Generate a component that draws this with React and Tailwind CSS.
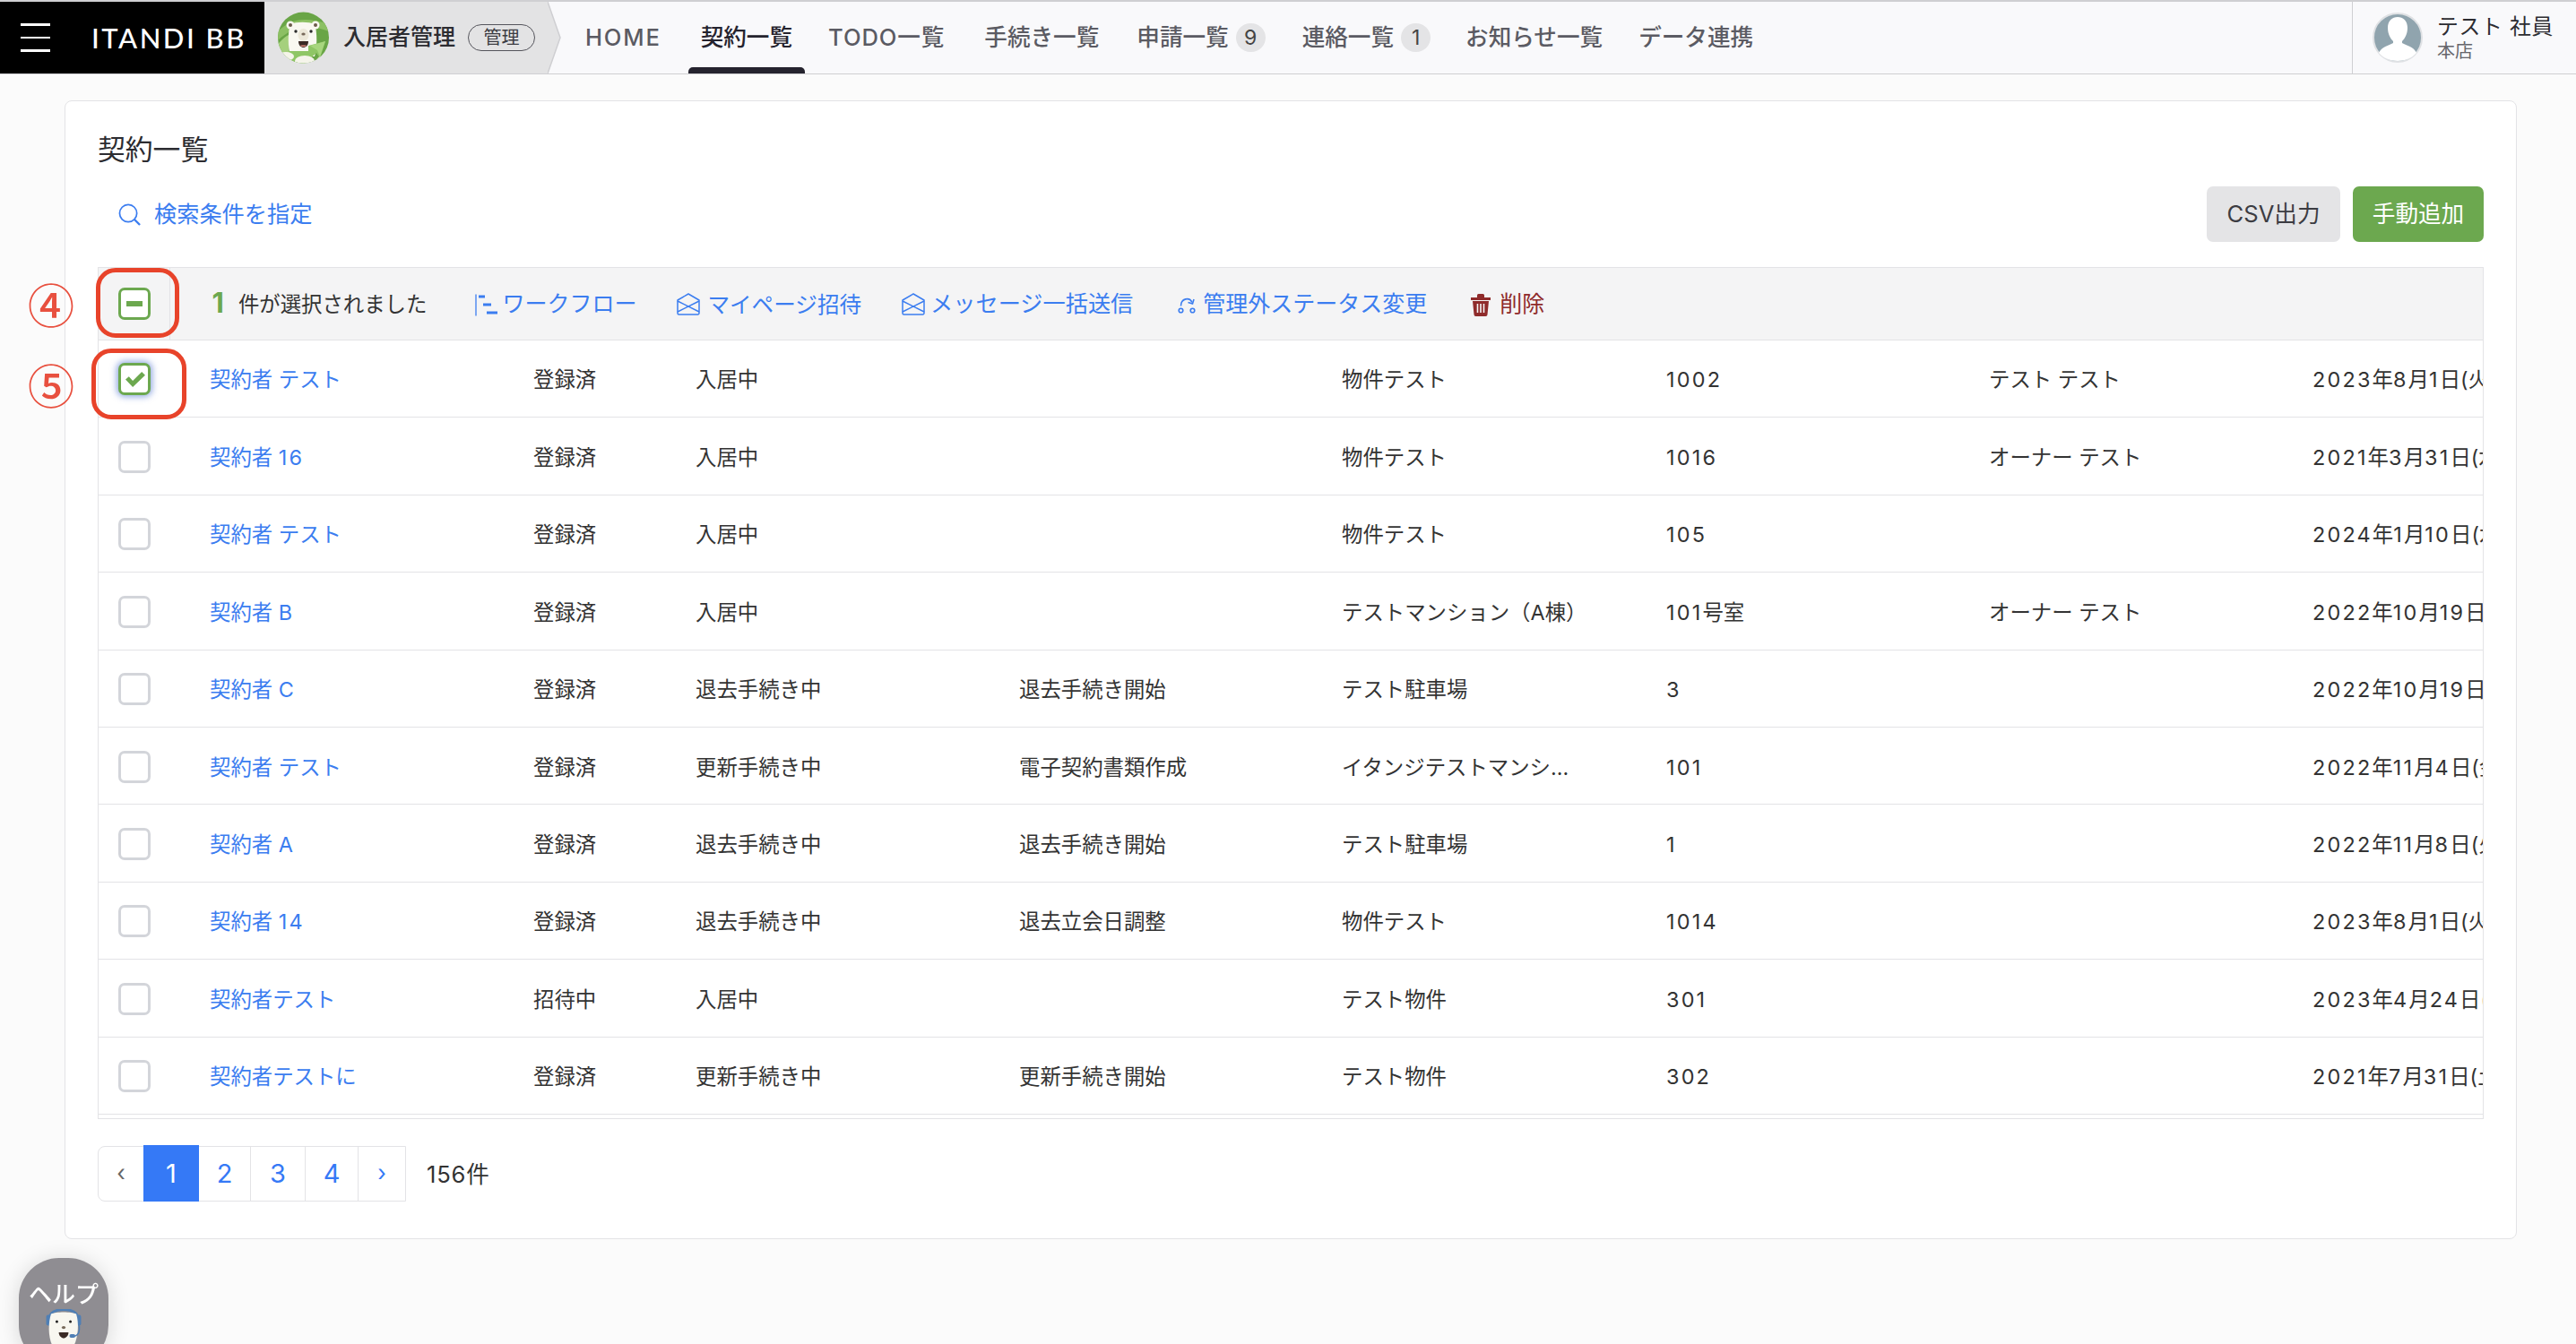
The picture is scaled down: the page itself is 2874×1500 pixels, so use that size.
const FONT = "font-['Inter','Noto_Sans_CJK_JP',sans-serif]";

const rows = [
  { name: "契約者 テスト", reg: "登録済", status: "入居中", step: "", prop: "物件テスト", room: "1002", owner: "テスト テスト", date: "2023年8月1日(火)", checked: true },
  { name: "契約者 16", reg: "登録済", status: "入居中", step: "", prop: "物件テスト", room: "1016", owner: "オーナー テスト", date: "2021年3月31日(水)" },
  { name: "契約者 テスト", reg: "登録済", status: "入居中", step: "", prop: "物件テスト", room: "105", owner: "", date: "2024年1月10日(水)" },
  { name: "契約者 B", reg: "登録済", status: "入居中", step: "", prop: "テストマンション（A棟）", room: "101号室", owner: "オーナー テスト", date: "2022年10月19日(水)" },
  { name: "契約者 C", reg: "登録済", status: "退去手続き中", step: "退去手続き開始", prop: "テスト駐車場", room: "3", owner: "", date: "2022年10月19日(水)" },
  { name: "契約者 テスト", reg: "登録済", status: "更新手続き中", step: "電子契約書類作成", prop: "イタンジテストマンション", room: "101", owner: "", date: "2022年11月4日(金)" },
  { name: "契約者 A", reg: "登録済", status: "退去手続き中", step: "退去手続き開始", prop: "テスト駐車場", room: "1", owner: "", date: "2022年11月8日(火)" },
  { name: "契約者 14", reg: "登録済", status: "退去手続き中", step: "退去立会日調整", prop: "物件テスト", room: "1014", owner: "", date: "2023年8月1日(火)" },
  { name: "契約者テスト", reg: "招待中", status: "入居中", step: "", prop: "テスト物件", room: "301", owner: "", date: "2023年4月24日(月)" },
  { name: "契約者テストに", reg: "登録済", status: "更新手続き中", step: "更新手続き開始", prop: "テスト物件", room: "302", owner: "", date: "2021年7月31日(土)" },
];

// digits sit wider in the original, so the number runs get some tracking
function Spaced({ text }) {
  return text.split(/(\d+)/).map((part, i) =>
    i % 2 === 1 ? <span key={i} className="tracking-[2.2px]">{part}</span> : part
  );
}

function LogoBear() {
  return (
    <svg viewBox="0 0 57 58" className="w-[57px] h-[58px] shrink-0">
      <defs>
        <clipPath id="logo-clip">
          <circle cx="28.5" cy="29" r="28.5" />
        </clipPath>
      </defs>
      <g clipPath="url(#logo-clip)">
        <rect width="57" height="58" fill="#69a546" />
        <path d="M0 22 C14 8 30 5 57 14 L57 22 C34 13 16 17 0 32 Z" fill="#8cc063" />
        <path d="M0 36 C6 30 8 28 12 26 L12 48 L0 50 Z" fill="#a5d07d" />
        <path d="M14 14 C20 11 35 11 41 14 C44 22 44 40 41 50 L14 50 C11 40 11 22 14 14 Z" fill="#f9f8f1" />
        <circle cx="14" cy="15" r="4.5" fill="#f9f8f1" />
        <circle cx="14" cy="15" r="2" fill="#6b5b4a" />
        <circle cx="42" cy="15" r="4.5" fill="#f9f8f1" />
        <circle cx="42" cy="15" r="2" fill="#6b5b4a" />
        <circle cx="20" cy="22" r="1.7" fill="#2a2a2a" />
        <circle cx="37" cy="22" r="1.7" fill="#2a2a2a" />
        <ellipse cx="28.5" cy="26" rx="6" ry="7" fill="#ece8d9" />
        <ellipse cx="28.5" cy="25" rx="2.2" ry="1.6" fill="#77695a" />
        <path d="M23 33 H34 C34 38 31 40 28.5 40 C26 40 23 38 23 33 Z" fill="#3a2a25" />
        <path d="M25 37.5 H32 C31 39.5 26 39.5 25 37.5 Z" fill="#e58c80" />
        <path d="M12 44 L34 44 L34 38 L53 33 L47 52 L43 46 L30 58 L10 58 Z" fill="#8fc665" />
        <path d="M36 38 L53 33 L47 50 L44 43 Z" fill="#a8d67e" />
        <ellipse cx="9" cy="50" rx="9" ry="5" fill="#f5f4ea" />
        <ellipse cx="30" cy="55" rx="11" ry="6" fill="#f5f4ea" />
        <ellipse cx="52" cy="55" rx="9" ry="6" fill="#e6e3d3" />
      </g>
    </svg>
  );
}

function HelpBear() {
  return (
    <svg viewBox="0 0 44 37" className="absolute left-[26px] top-[57px] w-[48px] h-[40px]">
      <path d="M7 11 C7 3 14 0.5 22 0.5 C30 0.5 37 3 37 11" fill="none" stroke="#4f7fb5" strokeWidth="2.5" />
      <rect x="4" y="6" width="5" height="11" rx="2" fill="#4f7fb5" />
      <rect x="35" y="6" width="5" height="11" rx="2" fill="#4f7fb5" />
      <path d="M9 5 C14 2.5 30 2.5 35 5 C38 14 37 28 33 37 L10 37 C6 28 6 14 9 5 Z" fill="#f8f7f0" />
      <circle cx="15" cy="13" r="1.4" fill="#222" />
      <circle cx="29" cy="13" r="1.4" fill="#222" />
      <ellipse cx="22" cy="19" rx="2" ry="1.5" fill="#77695a" />
      <path d="M17 24 H27 C27 28 24 30 22 30 C20 30 17 28 17 24 Z" fill="#3a2a25" />
      <path d="M38 16 C39 24 37 28 31 28" fill="none" stroke="#4f7fb5" strokeWidth="1.4" />
      <rect x="28" y="26" width="6" height="3.5" rx="1.7" fill="#4f7fb5" />
    </svg>
  );
}

function WorkflowIcon() {
  return (
    <svg viewBox="0 0 25 25" className="w-[25px] h-[25px] shrink-0" fill="none" stroke="#3b7df0">
      <path d="M1 0.5 V24.5" strokeWidth="1.3" />
      <path d="M4 3 H11" strokeWidth="3" />
      <path d="M9 12 H18" strokeWidth="3" />
      <path d="M13 21 H25" strokeWidth="3" />
    </svg>
  );
}

function EnvelopeIcon() {
  return (
    <svg viewBox="0 0 26 25" className="w-[26px] h-[25px] shrink-0" fill="none" stroke="#3b7df0" strokeWidth="1.5" strokeLinejoin="round">
      <path d="M1 8 L13 1 L25 8 V22.5 A1.5 1.5 0 0 1 23.5 24 H2.5 A1.5 1.5 0 0 1 1 22.5 Z" />
      <path d="M1 9 L25 21 M25 9 L1 21" />
    </svg>
  );
}

function RouteIcon() {
  return (
    <svg viewBox="0 0 20 20" className="w-[20px] h-[20px] shrink-0" fill="none" stroke="#3b7df0" strokeWidth="1.6">
      <circle cx="3.5" cy="16.5" r="2.3" />
      <circle cx="16.5" cy="16.5" r="2.3" />
      <path d="M3.5 11.5 C3.5 3 13 1 16 7.5" />
      <path d="M11.5 7.5 L16.5 9 L18 4" />
    </svg>
  );
}

function TrashIcon() {
  return (
    <svg viewBox="0 0 22 25" className="w-[22px] h-[25px] shrink-0">
      <path d="M0 4 H7 V1.5 A1.5 1.5 0 0 1 8.5 0 H13.5 A1.5 1.5 0 0 1 15 1.5 V4 H22 V7 H0 Z" fill="#8f2b2b" />
      <path d="M2 8 H20 L18.5 23 A2 2 0 0 1 16.5 25 H5.5 A2 2 0 0 1 3.5 23 Z" fill="#8f2b2b" />
      <path d="M7.5 11 V21 M11 11 V21 M14.5 11 V21" stroke="#f4f4f5" strokeWidth="1.6" />
    </svg>
  );
}

function Checkbox({ state }) {
  if (state === "indeterminate") {
    return (
      <span className="flex items-center justify-center w-[36px] h-[36px] rounded-[7px] border-[3px] border-[#6ca84f] bg-white">
        <span className="w-[18px] h-[6px] bg-[#6ca84f]" />
      </span>
    );
  }
  if (state === "checked") {
    return (
      <span className="flex items-center justify-center w-[36px] h-[36px] rounded-[7px] border-[3px] border-[#6ca84f] bg-white shadow-[0_0_7px_2px_rgba(59,100,200,0.55)]">
        <svg viewBox="0 0 26 22" className="w-[25px] h-[21px]">
          <path d="M2 11 L6 7.5 L10.5 12.5 L21 2 L25 6 L10.5 20 Z" fill="#6ca84f" />
        </svg>
      </span>
    );
  }
  return <span className="block w-[36px] h-[36px] rounded-[7px] border-[3px] border-[#d3d5da] bg-white" />;
}

function NavItem({ label, badge, active, className = "" }) {
  return (
    <a className={`relative flex items-center h-full px-[22px] text-[25.6px] font-medium ${active ? "text-[#25232e]" : "text-[#5b5b63]"} ${className}`}>
      {label}
      {badge && (
        <span className="ml-[8px] -mr-[7px] flex items-center justify-center w-[33px] h-[32px] rounded-full bg-[#e4e4e6] text-[23px] font-normal text-[#444]">
          {badge}
        </span>
      )}
      {active && <span className="absolute left-[8px] right-[8px] bottom-0 h-[7px] rounded-t-[5px] bg-[#25232e]" />}
    </a>
  );
}

function Header() {
  return (
    <header className="flex h-[83px] border-t-2 border-b-[1.5px] border-[#cfcfd2] bg-[#f9f9fb]">
      <div className="flex items-center w-[295px] bg-black shrink-0">
        <div className="ml-[23px] flex flex-col gap-[12px]">
          <span className="block w-[33px] h-[2.5px] bg-white" />
          <span className="block w-[33px] h-[2.5px] bg-white" />
          <span className="block w-[33px] h-[2.5px] bg-white" />
        </div>
        <span className="ml-[46px] whitespace-nowrap font-['Lato',sans-serif] text-[31px] font-medium tracking-[2.5px] text-white">ITANDI BB</span>
      </div>
      <div className="relative flex items-center w-[316px] pl-[15px] bg-[#e3e3e4] shrink-0">
        <LogoBear />
        <span className="ml-[16px] text-[25px] font-medium text-[#2c2c31] whitespace-nowrap">入居者管理</span>
        <span className="ml-[14px] flex items-center justify-center w-[75px] h-[30px] rounded-full border-[1.5px] border-[#55555c] text-[20px] text-[#3c3c42]">管理</span>
        <svg viewBox="0 0 15 80" preserveAspectRatio="none" className="absolute left-full top-0 h-full w-[15px]">
          <path d="M0 0 L14 40 L0 80 Z" fill="#e3e3e4" />
          <path d="M0 0 L14 40 L0 80" fill="none" stroke="#cfcfd2" strokeWidth="1.5" />
        </svg>
      </div>
      <nav className="flex items-center h-full ml-[20px]">
        <NavItem label="HOME" className="tracking-[1.8px]" />
        <NavItem label="契約一覧" active className="-mr-[4px]" />
        <NavItem label="TODO一覧" className="tracking-[0.9px]" />
        <NavItem label="手続き一覧" className="-mr-[2px]" />
        <NavItem label="申請一覧" badge="9" className="mr-[4px]" />
        <NavItem label="連絡一覧" badge="1" className="mr-[2px]" />
        <NavItem label="お知らせ一覧" className="-mr-[4px]" />
        <NavItem label="データ連携" />
      </nav>
      <div className="ml-auto flex items-center w-[250px] h-full pl-[22px] border-l-[1.5px] border-[#cfcfd2]">
        <svg viewBox="0 0 56 56" className="w-[56px] h-[56px] shrink-0">
          <circle cx="28" cy="28" r="27" fill="#90a4ae" stroke="#dfe1e4" strokeWidth="2" />
          <path d="M17 17 C17 9 22 5 28 5 C34 5 39 9 39 17 C39 24 36 29 33 32 V34 C38 37 46 38 49 45 C44 51 36 54 28 54 C20 54 12 51 7 45 C10 38 18 37 23 34 V32 C20 29 17 24 17 17 Z" fill="#fff" />
        </svg>
        <div className="ml-[16px] flex flex-col whitespace-nowrap">
          <span className="text-[23.8px] leading-[30px] tracking-[0.7px] text-[#2c2c31]">テスト 社員</span>
          <span className="text-[20px] leading-[24px] text-[#66666c]">本店</span>
        </div>
      </div>
    </header>
  );
}

function ActionBar() {
  return (
    <div className="flex items-center h-[82px] bg-[#f4f4f5] border-y-[1.5px] border-[#e3e3e6]">
      <div className="flex items-center justify-center shrink-0 w-[80px] h-full border-r-[1.5px] border-[#e3e3e6]">
        <Checkbox state="indeterminate" />
      </div>
      <span className="ml-[46.5px] text-[31px] font-bold text-[#6ca84f]">1</span>
      <span className="ml-[16px] pt-[3px] text-[23.4px] text-[#333]">件が選択されました</span>
      <a className="ml-[54px] pt-[3px] flex items-center gap-[5px] text-[25px] text-[#3b7df0]"><WorkflowIcon />ワークフロー</a>
      <a className="ml-[45px] pt-[3px] flex items-center gap-[8px] text-[24.6px] text-[#3b7df0]"><EnvelopeIcon />マイページ招待</a>
      <a className="ml-[45px] pt-[3px] flex items-center gap-[6px] text-[25.2px] text-[#3b7df0]"><EnvelopeIcon />メッセージ一括送信</a>
      <a className="ml-[50px] pt-[3px] flex items-center gap-[8px] text-[25px] text-[#3b7df0]"><RouteIcon />管理外ステータス変更</a>
      <a className="ml-[49px] pt-[3px] flex items-center gap-[10px] text-[25px] text-[#8f2b2b]"><TrashIcon />削除</a>
    </div>
  );
}

function ContractTable() {
  const cell = "h-[86.4px] pl-[44px] pr-[42px] pt-[3px] border-b-[1.5px] border-[#e3e3e6] whitespace-nowrap overflow-hidden";
  return (
    <table className="table-fixed border-collapse w-[2787px] text-[23.4px] text-[#333]">
      <colgroup>
        <col className="w-[80px]" />
        <col className="w-[361px]" />
        <col className="w-[181px]" />
        <col className="w-[361px]" />
        <col className="w-[360px]" />
        <col className="w-[362px]" />
        <col className="w-[360px]" />
        <col className="w-[361px]" />
        <col className="w-[361px]" />
      </colgroup>
      <tbody>
        {rows.map((row, i) => (
          <tr key={i}>
            <td className="h-[86.4px] pt-[2px] border-b-[1.5px] border-[#e3e3e6]">
              <div className="flex justify-center">
                <Checkbox state={row.checked ? "checked" : "none"} />
              </div>
            </td>
            <td className={`${cell} text-[#3b7df0]`}><Spaced text={row.name} /></td>
            <td className={cell}>{row.reg}</td>
            <td className={cell}>{row.status}</td>
            <td className={cell}>{row.step}</td>
            <td className={`${cell} text-ellipsis`}>{row.prop}</td>
            <td className={cell}><Spaced text={row.room} /></td>
            <td className={cell}>{row.owner}</td>
            <td className={cell}><Spaced text={row.date} /></td>
          </tr>
        ))}
      </tbody>
    </table>
  );
}

function Pagination() {
  return (
    <div className="flex items-center mt-[30px]">
      <div className="flex h-[62px] border-[1.5px] border-[#e3e3e6] rounded-l-[8px] text-[#3579f6]">
        <a className="flex items-center justify-center w-[50px] text-[25px] text-[#666]">‹</a>
        <a className="flex items-center justify-center w-[62px] -my-[1.5px] bg-[#3579f6] text-white text-[29px]">1</a>
        <a className="flex items-center justify-center w-[58px] border-r-[1.5px] border-[#e3e3e6] text-[29px]">2</a>
        <a className="flex items-center justify-center w-[61px] border-r-[1.5px] border-[#e3e3e6] text-[29px]">3</a>
        <a className="flex items-center justify-center w-[59px] border-r-[1.5px] border-[#e3e3e6] text-[29px]">4</a>
        <a className="flex items-center justify-center w-[52px] text-[25px]">›</a>
      </div>
      <span className="ml-[23px] mt-[3px] text-[25.6px] tracking-[0.8px] text-[#333]">156件</span>
    </div>
  );
}

export default function App() {
  return (
    <div className={`relative h-screen overflow-hidden bg-[#fbfbfb] ${FONT}`}>
      <Header />

      <main className="mt-[29px] ml-[72px] w-[2736px] h-[1271px] px-[36px] pt-[33px] bg-white border-[1.5px] border-[#e3e3e6] rounded-[8px]">
        <h1 className="text-[30.8px] leading-[41px] font-normal text-[#2c2c31]">契約一覧</h1>

        <div className="flex items-center justify-between mt-[20.5px]">
          <a className="flex items-center gap-[15px] pl-[23px] pt-[2px] text-[25.2px] text-[#3b7df0]">
            <svg viewBox="0 0 26 26" className="w-[25px] h-[25px]" fill="none" stroke="#3b7df0" strokeWidth="1.8">
              <circle cx="11.5" cy="11.5" r="10" />
              <path d="M18.5 18.5 L25 25" strokeWidth="2.4" />
            </svg>
            検索条件を指定
          </a>
          <div className="flex gap-[14px]">
            <button className="w-[149px] h-[62px] pt-[2px] rounded-[7px] bg-[#e4e4e6] text-[25.6px] text-[#3c3c42]">CSV出力</button>
            <button className="w-[146px] h-[62px] pt-[2px] rounded-[7px] bg-[#6ca84f] text-[25.6px] text-white">手動追加</button>
          </div>
        </div>

        <div className="mt-[28px] overflow-hidden border-l-[1.5px] border-r-[1.5px] border-b-[1.5px] border-[#e3e3e6] pb-[4px]">
          <ActionBar />
          <ContractTable />
        </div>

        <Pagination />
      </main>

      {/* annotations drawn over the screen */}
      <span className="absolute left-[31px] top-[313px] font-['Noto_Sans_CJK_JP',sans-serif] text-[52px] leading-[52px] font-medium text-[#e8503f]">④</span>
      <span className="absolute left-[31px] top-[403px] font-['Noto_Sans_CJK_JP',sans-serif] text-[52px] leading-[52px] font-medium text-[#e8503f]">⑤</span>
      <span className="absolute left-[107px] top-[299px] w-[93px] h-[78px] rounded-[22px] border-[5px] border-[#e8432a]" />
      <span className="absolute left-[102px] top-[389px] w-[106px] h-[79px] rounded-[22px] border-[5px] border-[#e8432a]" />

      <button className="fixed left-[21px] top-[1404px] w-[100px] h-[120px] rounded-[45px] bg-[#8f8d92] shadow-[0_2px_24px_rgba(0,0,0,0.15)] overflow-hidden">
        <span className="absolute left-0 right-0 top-[24px] text-center text-[26px] leading-[34px] font-medium text-white">ヘルプ</span>
        <HelpBear />
      </button>
    </div>
  );
}
